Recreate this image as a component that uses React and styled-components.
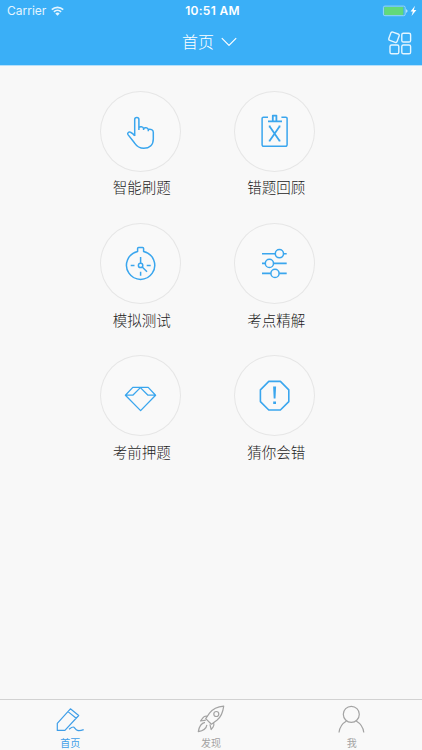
import React from "react"
import styled, { createGlobalStyle } from 'styled-components';


const GlobalStyle = createGlobalStyle`
* {
  box-sizing: border-box;
}
body {
  margin: 0;
  background: #f8f8f8;
  font-family: "Inter", "Noto Sans CJK SC", sans-serif;
}
`

const Page = styled.div`
width: 100%;
height: 100vh;
display: flex;
flex-direction: column;
overflow: hidden;
`

const Header = styled.header`
height: 66px;
flex: none;
background: #3aaff7;
border-bottom: 1px solid #b5e0fb;
color: #fff;
`

const StatusBar = styled.div`
height: 22px;
display: grid;
grid-template-columns: 1fr auto 1fr;
align-items: center;
padding: 0 4px 0 7px;
font-size: 12px;
line-height: 22px;
`

const Carrier = styled.div`
display: flex;
align-items: center;
gap: 5px;
color: #e4f5ff;
`

const Clock = styled.span`
font-size: 12px;
font-weight: 600;
letter-spacing: 0.3px;
`

const Power = styled.div`
display: flex;
justify-content: flex-end;
`

const TitleBar = styled.div`
height: 40px;
display: grid;
grid-template-columns: 1fr auto 1fr;
align-items: center;
padding: 0 9px 0 6px;
`

const Title = styled.h1`
grid-column: 2;
margin: 0;
display: flex;
align-items: center;
gap: 7px;
font-size: 16px;
font-weight: 300;
line-height: 24px;
`

const MenuButton = styled.button`
justify-self: end;
display: flex;
padding: 2px 0 0;
border: 0;
background: none;
color: #e4f5ff;
`

const Main = styled.main`
flex: 1;
display: grid;
grid-template-columns: 81px 81px;
grid-auto-rows: 132.4px;
column-gap: 53.5px;
justify-content: center;
align-content: start;
padding: 24.7px 7px 0 0;
`

const Item = styled.a`
display: flex;
flex-direction: column;
align-items: center;
color: #1c1c1c;
font-size: 14.5px;
font-weight: 300;
line-height: 20px;
white-space: nowrap;
`

const Circle = styled.div`
width: 81px;
height: 81px;
border-radius: 50%;
box-shadow: inset 0 0 0 1px #e6e6e6;
background: #f9f9f9;
`

const Label = styled.span`
margin-top: 6.5px;
padding-left: 3px;
`

const Icon = styled.svg`
display: block;
flex: none;
fill: none;
stroke: ${props => props.$color || "currentColor"};
stroke-width: ${props => props.$line || 1.4};
stroke-linejoin: round;
`

const TabBar = styled.nav`
height: 51px;
flex: none;
display: grid;
grid-template-columns: repeat(3, 1fr);
border-top: 1px solid #d2d2d2;
background: #f9f9f9;
`

const Tab = styled.a`
display: flex;
flex-direction: column;
align-items: center;
padding-top: 4px;
font-size: 10px;
line-height: 14px;
color: ${props => props.$active ? "#3f9ee8" : "#a3a3a3"};
`

const TabLabel = styled.span`
margin-top: 2px;
`

const items = [
    {
        label: "智能刷题",
        icon: <path d="M34.7 45V28.6a2.1 2.1 0 0 1 4.2 0V39M38.9 36.6c1-1.3 4-1.2 4.7.8V39M43.6 37.4c1.2-1 4-.8 4.7 1v1.8M48.3 38.5c2.2-.8 5 .2 5 2.7V48c0 6-4 9.3-9.5 9.3-4.5 0-7-2-9.4-5.5L28 43.6c-1-1.7.8-3.3 2.5-2.4 1.5.7 3 2 4.2 3.5" />
    },
    {
        label: "错题回顾",
        icon: <>
            <path d="M34 26.2h-4.6a1.3 1.3 0 0 0-1.3 1.3v26.3a1.5 1.5 0 0 0 1.5 1.5h22a1.5 1.5 0 0 0 1.5-1.5V27.5a1.3 1.3 0 0 0-1.3-1.3h-4.4" />
            <path d="M34 30.4h14M38.8 30v-5.4h3.6V30" strokeWidth="1.8" />
            <path d="M35.7 35.5l9.8 14.2M45.5 35.5l-9.8 14.2M34.8 35.5h1.8M44.6 35.5h1.8M34.8 49.7h1.8M44.6 49.7h1.8" strokeWidth="1.8" />
        </>
    },
    {
        label: "模拟测试",
        icon: <>
            <path d="M37.6 28.5v-3.1a1 1 0 0 1 1-1h4a1 1 0 0 1 1 1v3.1a14.1 14.1 0 1 1-6 0z" />
            <circle cx="40.6" cy="42.4" r="2.2" />
            <path d="M40.6 34v6.2M42.2 44l4.8 4.7M30.7 42.4h3.8M46.7 42.4h4M40.6 48.8v4" />
        </>
    },
    {
        label: "考点精解",
        icon: <>
            <path d="M28 30.7h13.2M49.6 30.7h3.1M28 40.4h3.2M39.6 40.4h13.1M28 50.4h8.8M45.2 50.4h7.5" strokeWidth="1.6" />
            <circle cx="45.4" cy="30.7" r="4.1" />
            <circle cx="35.4" cy="40.4" r="4.1" />
            <circle cx="41" cy="50.4" r="4.1" />
        </>
    },
    {
        label: "考前押题",
        icon: <path d="M25.4 40.2l7.4-7.8h15.4l7.4 7.8-15 15.4zM25.4 40.2h7.4l7.6-7.6 7.6 7.6h7.6" strokeWidth="1.3" />
    },
    {
        label: "猜你会错",
        icon: <>
            <path d="M34.8 26.4h11.6l8.4 8.5v11.7l-8.4 8.4H34.8l-8.4-8.4V34.9z" strokeWidth="1.6" />
            <path d="M39.1 31.4h3l-.6 12.200h-1.800zM39.200 46.600H42v2.400h-2.800z" fill="#3aa6ee" stroke="none" />
        </>
    }
]

const tabs = [
    {
        label: "首页",
        icon: <path d="M2.3 19.3L15.4 4.8l8.3 6.7L9.9 26.4H2.3zM13 7.6l8.2 6.6M14 25.2c2-1.5 3.700-2.900 4.900-2 1.200.9 1.600 2.700 3.600 3.200 2 .5 3.900 0 6.200-.8" />
    },
    {
        label: "发现",
        icon: <>
            <path d="M27.7 2.1c-6.7.6-11.3 3.2-14.2 7l-3.800 5.500 5.700 5.600 5.500-3.900c3.800-3 6-7.600 6.800-14.200z" />
            <circle cx="20.3" cy="10" r="2.5" />
            <path d="M11.3 12.3c-1.800-.5-3.300.1-4.400 1.500l-2.400 3.200 5.300-.8M17.600 18.700c.7 1.700.3 3.200-.6 4.500l-1.800 2.300-1.300-5.200M9 18.300c-4 .8-5.900 4.400-6.700 9.300 4.500-.8 8-2.800 8.600-6.800" />
        </>
    },
    {
        label: "我",
        icon: <>
            <circle cx="14.3" cy="10.3" r="8" />
            <path d="M2 28.500c.6-5 3.200-8.900 7.500-11.400M19.200 17.100c4.300 2.500 7 6.400 7.600 11.400" />
        </>
    }
]

const NavHeader = () => {
    return (
        <Header>
          <StatusBar>
            <Carrier>
              <span>Carrier</span>
              <Icon width="13" height="10" viewBox="0 0 13 10" $line={1.7}>
                <path d="M.8 3.6a8.2 8.2 0 0 1 11.4 0M2.9 5.9a5.2 5.2 0 0 1 7.2 0" />
                <path d="M6.5 9.7L4.3 7.5a3.2 3.2 0 0 1 4.4 0z" fill="currentColor" stroke="none" />
              </Icon>
            </Carrier>
            <Clock>10:51 AM</Clock>
            <Power>
              <Icon width="36" height="12" viewBox="0 0 36 12" $line={0.8}>
                <rect x="1.4" y="1.1" width="21.8" height="9.6" rx="1.5" stroke="#b3e2f4" />
                <rect x="2.2" y="1.9" width="19.2" height="8" rx=".8" fill="#62d97b" stroke="none" />
                <path d="M24.2 4.2c1.7.3 1.7 3.2 0 3.5z" fill="#c8ecff" stroke="none" />
                <path d="M33 .8L28.6 6.500h2.300l-1.400 4.600 4.900-6.100h-2.600z" fill="#fff" stroke="none" />
              </Icon>
            </Power>
          </StatusBar>
          <TitleBar>
            <Title>
              首页
              <Icon width="16" height="10" viewBox="0 0 16 10" $line={1.2}>
                <path d="M.8 1.2L8 8.4l7.200-7.200" />
              </Icon>
            </Title>
            <MenuButton aria-label="菜单">
              <Icon width="26" height="24" viewBox="0 0 26 24">
                <rect x="2.6" y="1.8" width="8.8" height="8.8" rx="1.6" transform="rotate(20 7 6.2)" />
                <rect x="14.8" y="2.2" width="8.8" height="8.8" rx="1.6" />
                <rect x="3" y="14" width="8.8" height="8.8" rx="1.6" />
                <rect x="14.8" y="14" width="8.8" height="8.8" rx="1.6" />
              </Icon>
            </MenuButton>
          </TitleBar>
        </Header>
    )
}

const App = () => {
    return (
        <Page>
          <GlobalStyle />
          <NavHeader />
          <Main>
            {items.map(item => (
              <Item key={item.label}>
                <Circle>
                  <Icon width="81" height="81" viewBox="0 0 81 81" $color="#3aa6ee" $line={1.5}>{item.icon}</Icon>
                </Circle>
                <Label>{item.label}</Label>
              </Item>
            ))}
          </Main>
          <TabBar>
            {tabs.map((tab, index) => (
              <Tab key={tab.label} $active={index === 0}>
                <Icon width="30" height="30" viewBox="0 0 30 30" $line={1.2}>{tab.icon}</Icon>
                <TabLabel>{tab.label}</TabLabel>
              </Tab>
            ))}
          </TabBar>
        </Page>
    )
}

export default App
